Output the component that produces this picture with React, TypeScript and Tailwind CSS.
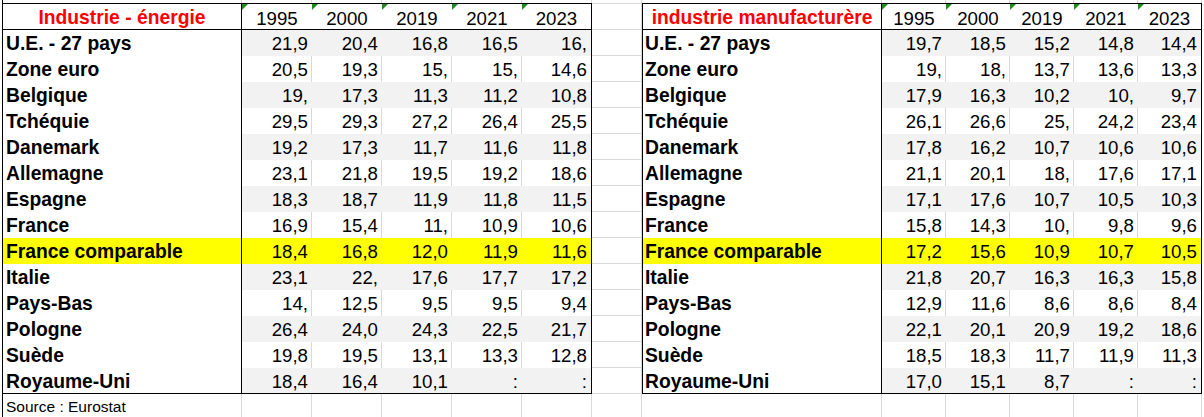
type Fill = 'g' | 'w' | 'y';

interface Row {
  label: string;
  values: string[];
  fill: Fill;
}

const YEARS = ['1995', '2000', '2019', '2021', '2023'];

const LABELS = [
  'U.E. - 27 pays',
  'Zone euro',
  'Belgique',
  'Tchéquie',
  'Danemark',
  'Allemagne',
  'Espagne',
  'France',
  'France comparable',
  'Italie',
  'Pays-Bas',
  'Pologne',
  'Suède',
  'Royaume-Uni',
];

const FILLS: Fill[] = ['g', 'w', 'g', 'w', 'g', 'w', 'g', 'w', 'y', 'g', 'w', 'g', 'w', 'g'];

const energie = [
  ['21,9', '20,4', '16,8', '16,5', '16,'],
  ['20,5', '19,3', '15,', '15,', '14,6'],
  ['19,', '17,3', '11,3', '11,2', '10,8'],
  ['29,5', '29,3', '27,2', '26,4', '25,5'],
  ['19,2', '17,3', '11,7', '11,6', '11,8'],
  ['23,1', '21,8', '19,5', '19,2', '18,6'],
  ['18,3', '18,7', '11,9', '11,8', '11,5'],
  ['16,9', '15,4', '11,', '10,9', '10,6'],
  ['18,4', '16,8', '12,0', '11,9', '11,6'],
  ['23,1', '22,', '17,6', '17,7', '17,2'],
  ['14,', '12,5', '9,5', '9,5', '9,4'],
  ['26,4', '24,0', '24,3', '22,5', '21,7'],
  ['19,8', '19,5', '13,1', '13,3', '12,8'],
  ['18,4', '16,4', '10,1', ':', ':'],
];

const manuf = [
  ['19,7', '18,5', '15,2', '14,8', '14,4'],
  ['19,', '18,', '13,7', '13,6', '13,3'],
  ['17,9', '16,3', '10,2', '10,', '9,7'],
  ['26,1', '26,6', '25,', '24,2', '23,4'],
  ['17,8', '16,2', '10,7', '10,6', '10,6'],
  ['21,1', '20,1', '18,', '17,6', '17,1'],
  ['17,1', '17,6', '10,7', '10,5', '10,3'],
  ['15,8', '14,3', '10,', '9,8', '9,6'],
  ['17,2', '15,6', '10,9', '10,7', '10,5'],
  ['21,8', '20,7', '16,3', '16,3', '15,8'],
  ['12,9', '11,6', '8,6', '8,6', '8,4'],
  ['22,1', '20,1', '20,9', '19,2', '18,6'],
  ['18,5', '18,3', '11,7', '11,9', '11,3'],
  ['17,0', '15,1', '8,7', ':', ':'],
];

const toRows = (data: string[][]): Row[] =>
  data.map((values, i) => ({ label: LABELS[i], values, fill: FILLS[i] }));

const LEFT_COLS = ['w-[70px]', 'w-[70px]', 'w-[70px]', 'w-[70px]', 'w-[69px]'];
const RIGHT_COLS = ['w-[64px]', 'w-[64px]', 'w-[64px]', 'w-[64px]', 'w-[63px]'];

function Marker() {
  // little green "number stored as text" flag
  return (
    <svg className="absolute left-0 top-0" width="6" height="6" viewBox="0 0 6 6">
      <polygon points="0,0 6,0 0,6" fill="#1f8a1f" />
    </svg>
  );
}

function DataTable({
  title,
  rows,
  cols,
  width,
  labelPad,
}: {
  title: string;
  rows: Row[];
  cols: string[];
  width: string;
  labelPad: string;
}) {
  return (
    <div className={`${width} border border-black flex flex-col`}>
      {/* Header */}
      <div className="flex h-[26px] border-b border-black bg-white">
        <div className="w-[239px] shrink-0 border-r border-black text-center text-[19.3px] font-bold leading-[28.5px] whitespace-nowrap text-[#ff0000]">
          {title}
        </div>
        {YEARS.map((y, i) => (
          <div key={y} className={`${cols[i]} relative shrink-0 text-center text-[18.67px] leading-[29px]`}>
            <Marker />
            {y}
          </div>
        ))}
      </div>

      {/* Body */}
      {rows.map((r, ri) => {
        const last = ri === rows.length - 1;
        const rowBg = r.fill === 'y' ? 'bg-[#ffff00]' : r.fill === 'g' ? 'bg-[#f2f2f2]' : 'bg-white';
        return (
          <div key={r.label} className={`flex ${last ? 'h-[25px]' : 'h-[26px]'}`}>
            <div
              className={`w-[239px] shrink-0 border-r border-black ${labelPad} text-[19.3px] font-bold leading-[28px] whitespace-nowrap ${
                r.fill === 'y' ? 'bg-[#ffff00]' : 'bg-white'
              }`}
            >
              {r.label}
            </div>
            {r.values.map((v, ci) => (
              <div
                key={ci}
                className={`${cols[ci]} shrink-0 border-r pr-[3px] text-right text-[18.67px] leading-[27px] ${rowBg} ${
                  r.fill === 'w' && ci < 4 ? 'border-[#d9d9d9]' : 'border-transparent'
                }`}
              >
                {v}
              </div>
            ))}
          </div>
        );
      })}
    </div>
  );
}

function GapColumn() {
  return (
    <div className="w-[50px] shrink-0 flex flex-col border-t border-r border-[#d9d9d9]">
      {Array.from({ length: 15 }).map((_, i) => (
        <div key={i} className="h-[26px] border-b border-[#d9d9d9]" />
      ))}
    </div>
  );
}

function GridStrip({ height, children }: { height: string; children?: React.ReactNode }) {
  const cell = `${height} shrink-0 border-r border-[#d9d9d9]`;
  return (
    <div className="flex">
      <div className="w-[2px] shrink-0" />
      <div className={`${cell} w-[240px] border-l border-l-black pl-[3px]`}>{children}</div>
      {LEFT_COLS.map((c, i) => (
        <div key={'l' + i} className={`${cell} ${i === 4 ? 'w-[70px]' : c}`} />
      ))}
      <div className={`${cell} w-[50px]`} />
      <div className={`${cell} w-[240px]`} />
      {RIGHT_COLS.map((c, i) => (
        <div key={'r' + i} className={`${cell} ${i === 4 ? 'w-[64px]' : c}`} />
      ))}
    </div>
  );
}

export default function App() {
  return (
    <div className="h-[417px] w-[1204px] overflow-hidden bg-white font-['Liberation_Sans',Arial,sans-serif] text-black">
      <GridStrip height="h-[3px]" />
      <div className="flex">
        <div className="w-[2px] shrink-0" />
        <DataTable
          title="Industrie - énergie"
          rows={toRows(energie)}
          cols={LEFT_COLS}
          width="w-[590px]"
          labelPad="pl-[3px]"
        />
        <GapColumn />
        <DataTable
          title="industrie manufacturère"
          rows={toRows(manuf)}
          cols={RIGHT_COLS}
          width="w-[560px]"
          labelPad="pl-[2px]"
        />
      </div>
      <GridStrip height="h-[26px]">
        <span className="text-[15.5px] leading-[26px] whitespace-nowrap">Source : Eurostat</span>
      </GridStrip>
    </div>
  );
}
